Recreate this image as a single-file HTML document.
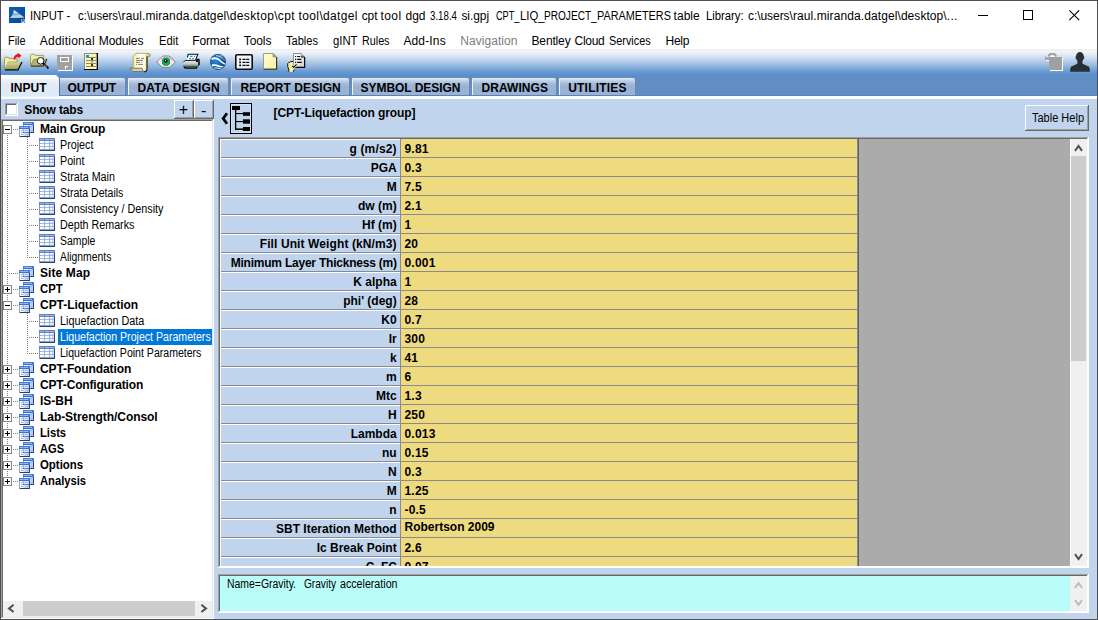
<!DOCTYPE html>
<html lang="en"><head><meta charset="utf-8"><title>INPUT - gINT</title>
<style>
html,body{margin:0;padding:0;}
body{width:1098px;height:620px;overflow:hidden;position:relative;background:#fff;font-family:"Liberation Sans",sans-serif;font-size:12px;color:#000;}
.a{position:absolute;}
.t{position:absolute;white-space:pre;line-height:16px;height:16px;transform-origin:0 0;}
.r{transform-origin:100% 0;}
.b{font-weight:bold;}
.v{letter-spacing:.2px;}
</style></head><body>
<div class="a" style="left:0px;top:49px;width:1098px;height:26px;background:linear-gradient(#f0f0f0 0,#f0f0f0 2px,#f4f7fc 2px,#dfe9f6 6px,#c6d8ee 10px,#a9c5e6 14px,#8db3dd 18px,#6c9dd4 22px,#578fcd 26px);"></div>
<div class="a" style="left:0px;top:75px;width:1098px;height:21px;background:#608dc3;"></div>
<div class="a" style="left:0px;top:95px;width:1098px;height:1px;background:#5f80b2;"></div>
<div class="a" style="left:0px;top:96px;width:1098px;height:3px;background:#fafcff;"></div>
<div class="a" style="left:0px;top:99px;width:1098px;height:521px;background:#c0d5ed;"></div>
<div class="a" style="left:1px;top:75px;width:58px;height:24px;background:linear-gradient(#fff 0,#fff 2px,#edf3fb 5px,#e1ebf8 9px,#dfeaf7 21px,#f4f8fd 22px,#fafcff 24px);clip-path:polygon(0 0,55px 0,58px 3px,58px 100%,0 100%);"></div>
<div class="a" style="left:59px;top:78px;width:67px;height:17px;background:#7186ae;border-radius:0px 2px 0 0;"></div>
<div class="a" style="left:59px;top:78px;width:66px;height:17px;background:linear-gradient(#e6edf7 0,#c9d7ea 2px,#a9bfdc 5px,#9ab3d5 8px,#9ab3d4 100%);border-radius:0px 2px 0 0;border-left:1px solid #5d7099;box-sizing:border-box;"></div>
<div class="a" style="left:128px;top:78px;width:101px;height:17px;background:#7186ae;border-radius:1px 2px 0 0;"></div>
<div class="a" style="left:128px;top:78px;width:100px;height:17px;background:linear-gradient(#e6edf7 0,#c9d7ea 2px,#a9bfdc 5px,#9ab3d5 8px,#9ab3d4 100%);border-radius:1px 2px 0 0;border-left:1px solid #eef3fa;box-sizing:border-box;"></div>
<div class="a" style="left:231px;top:78px;width:119px;height:17px;background:#7186ae;border-radius:1px 2px 0 0;"></div>
<div class="a" style="left:231px;top:78px;width:118px;height:17px;background:linear-gradient(#e6edf7 0,#c9d7ea 2px,#a9bfdc 5px,#9ab3d5 8px,#9ab3d4 100%);border-radius:1px 2px 0 0;border-left:1px solid #eef3fa;box-sizing:border-box;"></div>
<div class="a" style="left:352px;top:78px;width:118px;height:17px;background:#7186ae;border-radius:1px 2px 0 0;"></div>
<div class="a" style="left:352px;top:78px;width:117px;height:17px;background:linear-gradient(#e6edf7 0,#c9d7ea 2px,#a9bfdc 5px,#9ab3d5 8px,#9ab3d4 100%);border-radius:1px 2px 0 0;border-left:1px solid #eef3fa;box-sizing:border-box;"></div>
<div class="a" style="left:472px;top:78px;width:85px;height:17px;background:#7186ae;border-radius:1px 2px 0 0;"></div>
<div class="a" style="left:472px;top:78px;width:84px;height:17px;background:linear-gradient(#e6edf7 0,#c9d7ea 2px,#a9bfdc 5px,#9ab3d5 8px,#9ab3d4 100%);border-radius:1px 2px 0 0;border-left:1px solid #eef3fa;box-sizing:border-box;"></div>
<div class="a" style="left:559px;top:78px;width:77px;height:17px;background:#7186ae;border-radius:1px 2px 0 0;"></div>
<div class="a" style="left:559px;top:78px;width:76px;height:17px;background:linear-gradient(#e6edf7 0,#c9d7ea 2px,#a9bfdc 5px,#9ab3d5 8px,#9ab3d4 100%);border-radius:1px 2px 0 0;border-left:1px solid #eef3fa;box-sizing:border-box;"></div>
<div class="a" style="left:1px;top:119px;width:213px;height:500px;background:#fff;"></div>
<div class="a" style="left:1px;top:119px;width:212px;height:1px;background:#a0a0a0;"></div>
<div class="a" style="left:1px;top:119px;width:1px;height:499px;background:#a0a0a0;"></div>
<div class="a" style="left:2px;top:120px;width:210px;height:1px;background:#696969;"></div>
<div class="a" style="left:2px;top:120px;width:1px;height:497px;background:#696969;"></div>
<div class="a" style="left:212px;top:120px;width:1px;height:498px;background:#e3e3e3;"></div>
<div class="a" style="left:2px;top:617px;width:211px;height:1px;background:#e3e3e3;"></div>
<div class="a" style="left:3px;top:601px;width:209px;height:16px;background:#f0f0f0;"></div>
<div class="a" style="left:23px;top:601px;width:172px;height:15px;background:#cdcdcd;"></div>
<svg class="a" style="left:7px;top:604px;" width="8" height="9" viewBox="0 0 8 9" ><path d="M6.6 0.8 L2 4.4 L6.6 8" fill="none" stroke="#505050" stroke-width="2"/></svg>
<svg class="a" style="left:200px;top:604px;" width="8" height="9" viewBox="0 0 8 9" ><path d="M1.4 0.8 L6 4.4 L1.4 8" fill="none" stroke="#505050" stroke-width="2"/></svg>
<div class="a" style="left:218px;top:137px;width:871px;height:431px;background:#fff;"></div>
<div class="a" style="left:218px;top:137px;width:870px;height:1px;background:#a0a0a0;"></div>
<div class="a" style="left:218px;top:137px;width:1px;height:430px;background:#a0a0a0;"></div>
<div class="a" style="left:219px;top:138px;width:868px;height:1px;background:#696969;"></div>
<div class="a" style="left:219px;top:138px;width:1px;height:428px;background:#696969;"></div>
<div class="a" style="left:220px;top:139px;width:180px;height:427px;background:#c0d5ed;"></div>
<div class="a" style="left:400px;top:139px;width:1px;height:427px;background:#8a8a8c;"></div>
<div class="a" style="left:401px;top:139px;width:456px;height:427px;background:#eedb80;"></div>
<div class="a" style="left:857px;top:139px;width:1px;height:427px;background:#8a8a96;"></div>
<div class="a" style="left:858px;top:139px;width:1px;height:427px;background:#606060;"></div>
<div class="a" style="left:859px;top:139px;width:211px;height:427px;background:#ababab;"></div>
<div class="a" style="left:1070px;top:139px;width:17px;height:427px;background:#f0f0f0;"></div>
<div class="a" style="left:1071px;top:156px;width:15px;height:205px;background:#cdcdcd;"></div>
<div class="a" style="left:1070px;top:139px;width:1px;height:427px;background:#fbfbfb;"></div>
<svg class="a" style="left:1074px;top:144px;" width="9" height="8" viewBox="0 0 9 8" ><path d="M1 6.8 L4.5 2 L8 6.8" fill="none" stroke="#505050" stroke-width="2"/></svg>
<svg class="a" style="left:1074px;top:553px;" width="9" height="8" viewBox="0 0 9 8" ><path d="M1 1.2 L4.5 6 L8 1.2" fill="none" stroke="#505050" stroke-width="2"/></svg>
<div class="a" style="left:218px;top:574px;width:871px;height:39px;background:#fff;"></div>
<div class="a" style="left:218px;top:574px;width:870px;height:1px;background:#a0a0a0;"></div>
<div class="a" style="left:218px;top:574px;width:1px;height:38px;background:#a0a0a0;"></div>
<div class="a" style="left:219px;top:575px;width:868px;height:1px;background:#696969;"></div>
<div class="a" style="left:219px;top:575px;width:1px;height:36px;background:#696969;"></div>
<div class="a" style="left:220px;top:576px;width:850px;height:35px;background:#b9fdf8;"></div>
<div class="a" style="left:1070px;top:576px;width:17px;height:35px;background:#f0f0f0;"></div>
<svg class="a" style="left:1074px;top:581px;" width="9" height="8" viewBox="0 0 9 8" ><path d="M1 6.8 L4.5 2.2 L8 6.8" fill="none" stroke="#bcbcbc" stroke-width="2"/></svg>
<svg class="a" style="left:1074px;top:599px;" width="9" height="8" viewBox="0 0 9 8" ><path d="M1 1.2 L4.5 5.8 L8 1.2" fill="none" stroke="#bcbcbc" stroke-width="2"/></svg>
<div class="a" style="left:220px;top:139px;width:180px;height:1px;background:#fff;"></div>
<div class="a" style="left:220px;top:157px;width:637px;height:1px;background:#8a8a8c;"></div>
<div class="a" style="left:220px;top:158px;width:180px;height:1px;background:#fff;"></div>
<div class="a" style="left:220px;top:176px;width:637px;height:1px;background:#8a8a8c;"></div>
<div class="a" style="left:220px;top:177px;width:180px;height:1px;background:#fff;"></div>
<div class="a" style="left:220px;top:195px;width:637px;height:1px;background:#8a8a8c;"></div>
<div class="a" style="left:220px;top:196px;width:180px;height:1px;background:#fff;"></div>
<div class="a" style="left:220px;top:214px;width:637px;height:1px;background:#8a8a8c;"></div>
<div class="a" style="left:220px;top:215px;width:180px;height:1px;background:#fff;"></div>
<div class="a" style="left:220px;top:233px;width:637px;height:1px;background:#8a8a8c;"></div>
<div class="a" style="left:220px;top:234px;width:180px;height:1px;background:#fff;"></div>
<div class="a" style="left:220px;top:252px;width:637px;height:1px;background:#8a8a8c;"></div>
<div class="a" style="left:220px;top:253px;width:180px;height:1px;background:#fff;"></div>
<div class="a" style="left:220px;top:271px;width:637px;height:1px;background:#8a8a8c;"></div>
<div class="a" style="left:220px;top:272px;width:180px;height:1px;background:#fff;"></div>
<div class="a" style="left:220px;top:290px;width:637px;height:1px;background:#8a8a8c;"></div>
<div class="a" style="left:220px;top:291px;width:180px;height:1px;background:#fff;"></div>
<div class="a" style="left:220px;top:309px;width:637px;height:1px;background:#8a8a8c;"></div>
<div class="a" style="left:220px;top:310px;width:180px;height:1px;background:#fff;"></div>
<div class="a" style="left:220px;top:328px;width:637px;height:1px;background:#8a8a8c;"></div>
<div class="a" style="left:220px;top:329px;width:180px;height:1px;background:#fff;"></div>
<div class="a" style="left:220px;top:347px;width:637px;height:1px;background:#8a8a8c;"></div>
<div class="a" style="left:220px;top:348px;width:180px;height:1px;background:#fff;"></div>
<div class="a" style="left:220px;top:366px;width:637px;height:1px;background:#8a8a8c;"></div>
<div class="a" style="left:220px;top:367px;width:180px;height:1px;background:#fff;"></div>
<div class="a" style="left:220px;top:385px;width:637px;height:1px;background:#8a8a8c;"></div>
<div class="a" style="left:220px;top:386px;width:180px;height:1px;background:#fff;"></div>
<div class="a" style="left:220px;top:404px;width:637px;height:1px;background:#8a8a8c;"></div>
<div class="a" style="left:220px;top:405px;width:180px;height:1px;background:#fff;"></div>
<div class="a" style="left:220px;top:423px;width:637px;height:1px;background:#8a8a8c;"></div>
<div class="a" style="left:220px;top:424px;width:180px;height:1px;background:#fff;"></div>
<div class="a" style="left:220px;top:442px;width:637px;height:1px;background:#8a8a8c;"></div>
<div class="a" style="left:220px;top:443px;width:180px;height:1px;background:#fff;"></div>
<div class="a" style="left:220px;top:461px;width:637px;height:1px;background:#8a8a8c;"></div>
<div class="a" style="left:220px;top:462px;width:180px;height:1px;background:#fff;"></div>
<div class="a" style="left:220px;top:480px;width:637px;height:1px;background:#8a8a8c;"></div>
<div class="a" style="left:220px;top:481px;width:180px;height:1px;background:#fff;"></div>
<div class="a" style="left:220px;top:499px;width:637px;height:1px;background:#8a8a8c;"></div>
<div class="a" style="left:220px;top:500px;width:180px;height:1px;background:#fff;"></div>
<div class="a" style="left:220px;top:518px;width:637px;height:1px;background:#8a8a8c;"></div>
<div class="a" style="left:220px;top:519px;width:180px;height:1px;background:#fff;"></div>
<div class="a" style="left:220px;top:537px;width:637px;height:1px;background:#8a8a8c;"></div>
<div class="a" style="left:220px;top:538px;width:180px;height:1px;background:#fff;"></div>
<div class="a" style="left:220px;top:556px;width:637px;height:1px;background:#8a8a8c;"></div>
<div class="a" style="left:220px;top:557px;width:180px;height:1px;background:#fff;"></div>
<div class="a" style="left:220px;top:139px;width:1px;height:427px;background:#fff;"></div>
<div class="a" style="left:174px;top:100px;width:20px;height:19px;background:#c0d5ed;"></div>
<div class="a" style="left:174px;top:100px;width:19px;height:1px;background:#fff;"></div>
<div class="a" style="left:174px;top:100px;width:1px;height:18px;background:#fff;"></div>
<div class="a" style="left:193px;top:100px;width:1px;height:19px;background:#696969;"></div>
<div class="a" style="left:174px;top:118px;width:20px;height:1px;background:#696969;"></div>
<div class="a" style="left:192px;top:101px;width:1px;height:17px;background:#a0a0a0;"></div>
<div class="a" style="left:175px;top:117px;width:18px;height:1px;background:#a0a0a0;"></div>
<div class="a" style="left:194px;top:100px;width:20px;height:19px;background:#c0d5ed;"></div>
<div class="a" style="left:194px;top:100px;width:19px;height:1px;background:#fff;"></div>
<div class="a" style="left:194px;top:100px;width:1px;height:18px;background:#fff;"></div>
<div class="a" style="left:213px;top:100px;width:1px;height:19px;background:#696969;"></div>
<div class="a" style="left:194px;top:118px;width:20px;height:1px;background:#696969;"></div>
<div class="a" style="left:212px;top:101px;width:1px;height:17px;background:#a0a0a0;"></div>
<div class="a" style="left:195px;top:117px;width:18px;height:1px;background:#a0a0a0;"></div>
<div class="a" style="left:1025px;top:105px;width:64px;height:26px;background:#c0d5ed;"></div>
<div class="a" style="left:1025px;top:105px;width:63px;height:1px;background:#fff;"></div>
<div class="a" style="left:1025px;top:105px;width:1px;height:25px;background:#fff;"></div>
<div class="a" style="left:1088px;top:105px;width:1px;height:26px;background:#696969;"></div>
<div class="a" style="left:1025px;top:130px;width:64px;height:1px;background:#696969;"></div>
<div class="a" style="left:1087px;top:106px;width:1px;height:24px;background:#a0a0a0;"></div>
<div class="a" style="left:1026px;top:129px;width:62px;height:1px;background:#a0a0a0;"></div>
<div class="a" style="left:5px;top:103px;width:13px;height:13px;background:#fff;"></div>
<div class="a" style="left:5px;top:103px;width:13px;height:1px;background:#a0a0a0;"></div>
<div class="a" style="left:5px;top:103px;width:1px;height:13px;background:#a0a0a0;"></div>
<div class="a" style="left:6px;top:104px;width:11px;height:1px;background:#696969;"></div>
<div class="a" style="left:6px;top:104px;width:1px;height:11px;background:#696969;"></div>
<div class="a" style="left:17px;top:103px;width:1px;height:13px;background:#fff;"></div>
<div class="a" style="left:5px;top:115px;width:13px;height:1px;background:#fff;"></div>
<div class="a" style="left:16px;top:104px;width:1px;height:11px;background:#e3e3e3;"></div>
<div class="a" style="left:6px;top:114px;width:11px;height:1px;background:#e3e3e3;"></div>
<div class="a" style="left:0px;top:0px;width:1098px;height:1px;background:#4f4f4f;"></div>
<div class="a" style="left:0px;top:0px;width:1px;height:620px;background:#4f4f4f;"></div>
<div class="a" style="left:1097px;top:0px;width:1px;height:620px;background:#4f4f4f;"></div>
<div class="a" style="left:0px;top:619px;width:1098px;height:1px;background:#4f4f4f;"></div>
<svg class="a" style="left:9px;top:7px;" width="16" height="16" viewBox="0 0 16 16" ><defs><linearGradient id="gapp" x1="0" y1="0" x2="1" y2="1"><stop offset="0" stop-color="#0d62b2"/><stop offset="1" stop-color="#07468a"/></linearGradient></defs><rect width="16" height="16" fill="url(#gapp)"/><path d="M4.7 2.8 L15 10 V10.5 L1 10.9 C3 9 4.4 6 4.7 2.8 Z" fill="#8fb3da"/><path d="M1 10.9 L15 10.5 L11.4 8 L3.6 8.8 Z" fill="#bdd2e9"/><path d="M4.9 3.2 L8.8 6 L5.3 6.3 Z" fill="#dce8f5"/><path d="M12.2 12.4h2.8v.8h-2v.7h2v2h-2.8v-.8h2v-.5h-2zM15.3 12.2h.7v3.6h-.7z" fill="#c4d6ea"/></svg>
<svg class="a" style="left:978px;top:15px;" width="10" height="1" viewBox="0 0 10 1" shape-rendering="crispEdges"><rect width="10" height="1" fill="#000"/></svg>
<svg class="a" style="left:1023px;top:10px;" width="10" height="10" viewBox="0 0 10 10" shape-rendering="crispEdges"><rect x="0.5" y="0.5" width="9" height="9" fill="none" stroke="#000" stroke-width="1"/></svg>
<svg class="a" style="left:1069px;top:10px;" width="11" height="11" viewBox="0 0 11 11" ><path d="M0.3 0.3 L10.2 10.2 M10.2 0.3 L0.3 10.2" stroke="#000" stroke-width="1.1" fill="none"/></svg>
<svg class="a" style="left:4px;top:52px;" width="19" height="19" viewBox="0 0 19 19" ><path d="M0.5 17.5 V6.3 L1.3 5.3 H4.4 L5.2 6.6 H13 V10 H4.5 Z" fill="#f6f0a3" stroke="#8f8b50" stroke-width=".8"/><path d="M0.6 17.6 L4.3 10.4 H17.8 L13.9 17.6 Z" fill="#c9c684"/><path d="M0.6 17.6 L4.3 10.4 H17.8 L13.9 17.6 Z" fill="url(#gfold)" /><path d="M17.9 10 L14 17.9 H1" fill="none" stroke="#000" stroke-width="1.2"/><path d="M9.8 7.8 C9.6 3.8 11.8 2 14 2.2 L13.4 0.4 L17.4 3.4 L14.6 6.6 L14.3 4.8 C12.6 4.6 11.4 5.6 11.1 7.8 Z" fill="#f40b0b"/><defs><linearGradient id="gfold" x1="0" y1="0" x2="0" y2="1"><stop offset="0" stop-color="#d6d392"/><stop offset="1" stop-color="#9c9a5c"/></linearGradient></defs></svg>
<svg class="a" style="left:30px;top:53px;" width="20" height="17" viewBox="0 0 20 17" ><path d="M0.5 12.8 V2.2 L1.4 1.2 H4.4 L5.2 2.4 H13.4 V6.4 H4.5 Z" fill="#f3eea5" stroke="#8f8b50" stroke-width=".8"/><path d="M0.6 12.9 L3.6 6.3 H16.8 L13.6 12.9 Z" fill="#b5b376" stroke="#7f7c48" stroke-width=".6"/><path d="M16.9 6 L13.8 13.1 H1" fill="none" stroke="#2a2a20" stroke-width="1"/><circle cx="10.6" cy="7.8" r="3.3" fill="#fff" stroke="#1a1a1a" stroke-width="1"/><path d="M13.4 10.6 L17.8 14.8" stroke="#000" stroke-width="2" stroke-linecap="round"/><path d="M14.4 11.9 L16.8 14.2" stroke="#fff" stroke-width=".8"/></svg>
<svg class="a" style="left:57px;top:55px;" width="17" height="17" viewBox="0 0 17 17" shape-rendering="crispEdges"><rect x="1" y="1" width="15" height="15" fill="#fff"/><rect x="0" y="0" width="15" height="15" fill="#a0a0a0"/><rect x="3" y="2" width="9" height="5" fill="#fff"/><rect x="4" y="3" width="7" height="3" fill="#a0a0a0"/><path d="M8 11h3v1h-2v2h-1z" fill="#fff"/></svg>
<svg class="a" style="left:84px;top:53px;" width="15" height="18" viewBox="0 0 15 18" ><rect x="0" y="0" width="14" height="17" fill="#000"/><rect x="0" y="0" width="12.5" height="16" fill="#8a8a8a"/><rect x="1" y="1" width="11.5" height="15" fill="#fdf8a6"/><rect x="2" y="2" width="3" height="2" fill="#0a96ee"/><path d="M2 4.5h10M2 7.5h10M2 10.5h10M2 13.5h10" stroke="#8a8a7a" stroke-width="1"/><rect x="7.3" y="5" width="1.6" height="8" fill="#9a9a9a"/><rect x="7.3" y="5" width="1.6" height="2" fill="#111"/><rect x="7.3" y="11" width="1.6" height="2" fill="#111"/></svg>
<svg class="a" style="left:129px;top:52px;" width="22" height="21" viewBox="0 0 22 21" ><defs><linearGradient id="gscr" x1="0" y1="0" x2="1" y2="0"><stop offset="0" stop-color="#f8ee98"/><stop offset=".45" stop-color="#fffdf0"/><stop offset=".75" stop-color="#fffbe0"/><stop offset="1" stop-color="#f3e88c"/></linearGradient></defs><path d="M4.2 4.6 L7 1.3 H19 C18.2 2.2 18 3 18 4.6 V16.6 C18 18.6 16.8 19.8 15 19.8 C13.8 19.6 13.2 18.6 13 16.6 H4.2 Z" fill="url(#gscr)" stroke="#a39a5e" stroke-width=".8"/><path d="M18.4 1.6 C20.6 1.4 21.6 2.6 21 3.8 C20.4 4.6 18.8 4.6 18.2 4" fill="#f6eeaa" stroke="#6f6940" stroke-width=".9"/><path d="M18 4.4 V16.6 C18 18.6 16.8 19.9 15 19.9" fill="none" stroke="#1c1c14" stroke-width="1.1"/><path d="M1 16.2 H13 L14.6 19.6 H4 Z" fill="#d2d0a6" stroke="#6d6a48" stroke-width=".8"/><path d="M7 6.4h3.7M12 6.4h3M7 8.4h7M7 10.4h3.7M12.2 10.4h1M7 12.4h1M9 12.4h5" stroke="#7d7d7d" stroke-width="1"/></svg>
<svg class="a" style="left:156px;top:55px;" width="20" height="14" viewBox="0 0 20 14" ><path d="M1 6.8 C2.6 4.6 5 2.6 6.4 1.8 L7 1 H13 L14 1.8 C16 2.8 18 5 19 7.2 C17.4 9.4 15 11.4 13.6 12.4 H6.6 C4.6 11.2 2.4 9 1 6.8 Z" fill="#e9e9e9" stroke="#7a7a7a" stroke-width=".9"/><path d="M1.8 5.6 C3.4 4 5 3 6.4 2.6 M12.6 2.6 C14.4 3 15.6 4 16.6 5" fill="none" stroke="#e3a8da" stroke-width="1.3"/><path d="M17 5.6 L18.6 7.2" stroke="#e8c79a" stroke-width="1" stroke-dasharray="1 .6"/><path d="M8 2.6 H12 L14 4.6 V8.6 L12 10.8 H8 L6 8.6 V4.6 Z" fill="#0e9c4c"/><path d="M8.4 3.2 H11.6 L13.2 4.8 V8 L11.6 9.8 H8.4 L6.8 8 V4.8 Z" fill="#14ab56"/><circle cx="9.7" cy="5.8" r="1.9" fill="#0a0a0a"/><path d="M8.8 4.8h1.6l-1.2 1.6z" fill="#fff"/></svg>
<svg class="a" style="left:182px;top:53px;" width="19" height="17" viewBox="0 0 19 17" ><path d="M6.2 1.2 H15.8 L13.6 7.2 H4.6 Z" fill="#fff"/><path d="M5.4 4.4 L6.2 1.2 H15.8 L13.4 7.6" fill="none" stroke="#0c0c0c" stroke-width="1.1"/><path d="M8 3.4h2.6M12 3.4h1M7 5.6h2M10 5.6h2" stroke="#19a0ee" stroke-width="1.2"/><path d="M3 7.6 H14.4 L16.2 6 H17.8 V8 L16 9.4 H1.2 Z" fill="#e4e4e4"/><path d="M1.2 9.4 L3.2 7.4 H13.6" fill="none" stroke="#111" stroke-width="1"/><path d="M14.4 5.8 H17.6 V7.6 L16 9.2 H13.8 Z" fill="#111"/><rect x="1.2" y="9.2" width="14.8" height="1.6" fill="#d6d6d6"/><rect x="1.2" y="10.8" width="14.8" height="1.4" fill="#b0b0b0"/><rect x="1.2" y="12.2" width="14.8" height="1.3" fill="#8c8c8c"/><path d="M16 9.2 L18 7.4 V11.6 L16 13.5 Z" fill="#2a2a2a"/><rect x="9.8" y="12" width="2.3" height="1.2" fill="#10d828"/><path d="M1 13.4 H16.2 L14.6 15.8 H3 Z" fill="#000"/><path d="M3.4 14.4h10.6" stroke="#6a6a6a" stroke-width=".7"/></svg>
<svg class="a" style="left:210px;top:54px;" width="16" height="16" viewBox="0 0 16 16" ><defs><radialGradient id="gglobe" cx=".36" cy=".42" r=".7"><stop offset="0" stop-color="#2f88d4"/><stop offset=".55" stop-color="#1763b0"/><stop offset="1" stop-color="#072f63"/></radialGradient><clipPath id="cg"><circle cx="8" cy="7.9" r="7.9"/></clipPath></defs><circle cx="8" cy="7.9" r="7.9" fill="url(#gglobe)"/><g clip-path="url(#cg)" fill="#fff"><path d="M1.6 3.8 C4.5 2.4 8 3.4 10 5.4 C12 7.4 14 9 15.8 9.4 L15.4 10.9 C13 10.2 11 8.6 9 6.8 C7 5 4.5 4.8 1.4 5.9 Z"/><path d="M6 1.2 C9 1 12.5 3 15.2 6.2 L15.6 7.4 C12.6 4 9.5 2.3 5.6 2.1 Z" opacity=".8"/><path d="M10 0.5 C12 0.9 13.9 2.2 15 3.9 L14 3.7 C13 2.5 11.4 1.6 9.2 1.2 Z" opacity=".6"/><path d="M1.6 10.6 C4 9.9 7 10.6 9.4 11.6 C11 12.2 12.6 12.4 14 12.2 L13 13.5 C11 13.6 9 13 7 12.4 C5 11.8 3.4 12 2.2 12.8 Z"/><path d="M3.6 13.7 C5.6 13.1 8 13.6 11.8 14.3 L10.4 15.2 C8 14.7 6 14.3 4.6 14.8 Z" opacity=".9"/></g><circle cx="8" cy="7.9" r="7.6" fill="none" stroke="#0a2f5e" stroke-width=".5" opacity=".6"/></svg>
<svg class="a" style="left:235px;top:54px;" width="18" height="16" viewBox="0 0 18 16" ><defs><linearGradient id="glist" x1="0" y1="0" x2="1" y2="1"><stop offset="0" stop-color="#fff"/><stop offset="1" stop-color="#dfe7f3"/></linearGradient></defs><rect x="0.8" y="0.8" width="16.4" height="14.4" rx="1.2" fill="url(#glist)" stroke="#0c0c0c" stroke-width="1.6"/><path d="M4.2 4.4h1.8v1.8h-1.8zM4.2 7.4h1.8v1.8h-1.8zM4.2 10.4h1.8v1.8h-1.8z" fill="#0c0c0c"/><path d="M7.4 5.3h3.2M11.2 5.3h3M7.4 8.3h3.2M11.2 8.3h3M7.4 11.3h3.2M11.2 11.3h3" stroke="#0c0c0c" stroke-width="1.2"/></svg>
<svg class="a" style="left:263px;top:53px;" width="15" height="17" viewBox="0 0 15 17" ><defs><linearGradient id="gpage" x1="0" y1="0" x2="1" y2="1"><stop offset="0" stop-color="#fffdd2"/><stop offset="1" stop-color="#f6f0a4"/></linearGradient></defs><path d="M0.5 0.5 H10 L13.6 4 V16 H0.5 Z" fill="url(#gpage)" stroke="#94947e" stroke-width=".9"/><path d="M13.6 4 V16.2 H0.6" fill="none" stroke="#34342a" stroke-width="1.1"/><path d="M10 0.6 V4 H13.5 Z" fill="#b4b4a4" stroke="#6c6c60" stroke-width=".5"/></svg>
<svg class="a" style="left:287px;top:53px;" width="19" height="20" viewBox="0 0 19 20" ><defs><linearGradient id="gdoc" x1="0" y1="0" x2="1" y2="1"><stop offset="0" stop-color="#fff"/><stop offset="1" stop-color="#cfcfcf"/></linearGradient></defs><path d="M6.5 0.5 H14 L17.6 4 V14.2 H6.5 Z" fill="url(#gdoc)" stroke="#858585" stroke-width=".9"/><path d="M17.6 4 V14.4 H7.4" fill="none" stroke="#0c0c0c" stroke-width="1.2"/><path d="M14 0.6 V4 H17.5 Z" fill="#a4a4a4"/><path d="M14 4 H17.5" stroke="#0c0c0c" stroke-width=".9"/><path d="M8 3.5h1.2M10.2 3.5h3M8 6.4h1.2M10.2 6.4h4M8 9.4h1.2M10.2 9.4h4.6" stroke="#0c0c0c" stroke-width="1.1"/><path d="M0.7 10.6 L1.6 9.6 L3 9.4 L3.6 8.5 L6 8.5 L6.2 11.5 L7 13.2 L9.4 10.8 L10.4 11.5 L10.2 12.7 L7.2 15.6 L6.4 18.8 H1.8 V16 L0.7 13.6 Z" fill="#f8f2a0"/><path d="M1.8 18.8 V16 L0.7 13.6 V10.6 L1.6 9.6 L3 9.4 L3.6 8.5 H6" fill="none" stroke="#141414" stroke-width="1"/><path d="M5.2 12.8 L6.6 14.4 L9.6 11.4" fill="none" stroke="#141414" stroke-width="1.2"/><path d="M6.6 18.8 L7 16.6" stroke="#141414" stroke-width="1"/></svg>
<svg class="a" style="left:1045px;top:53px;" width="18" height="19" viewBox="0 0 18 19" ><rect x="5" y="5" width="13" height="13" fill="#fff"/><rect x="4" y="4" width="13" height="13" fill="#a0a0a0"/><path d="M1 4.4 H4 V7 H0 V2.2 Z" fill="#a0a0a0"/><path d="M1 7h3.2v1H1z" fill="#fff"/><path d="M3.4 3.6 C4 1.2 6 0.6 7.6 0.6 C9.4 0.6 10.6 1.6 11 3.4" fill="none" stroke="#9c9c9c" stroke-width="1.9"/><path d="M5.2 4 C6 2.8 9 2.8 9.6 4 Z" fill="#fff"/></svg>
<svg class="a" style="left:1070px;top:52px;" width="21" height="21" viewBox="0 0 21 21" ><ellipse cx="9.9" cy="5" rx="4" ry="4.9" fill="#2a2f35"/><path d="M5.6 4.6h8.6v2h-8.6z" fill="#2a2f35"/><path d="M7.4 8 H12.4 V11.4 C13.6 12.4 16.6 13.2 18.6 14.4 C19.6 15.2 19.8 16.4 19.8 17.6 V19.8 H0.2 V17.6 C0.2 16.4 0.4 15.2 1.4 14.4 C3.4 13.2 6.4 12.4 7.4 11.4 Z" fill="#2a2f35"/></svg>
<svg class="a" style="left:230px;top:103px;" width="22" height="31" viewBox="0 0 22 31" ><rect x="0.5" y="0.5" width="21" height="30" fill="none" stroke="#000" stroke-width="1"/><rect x="1.5" y="1.5" width="19" height="28" fill="none" stroke="#d3e3f6" stroke-width="1"/><rect x="2" y="3" width="8" height="4" fill="#000"/><rect x="5" y="7" width="1.3" height="20" fill="#000"/><rect x="5" y="10" width="9" height="1.1" fill="#000"/><rect x="5" y="18" width="9" height="1.1" fill="#000"/><rect x="5" y="25.4" width="9" height="1.6" fill="#000"/><rect x="13" y="9.2" width="7" height="3.6" fill="#000"/><rect x="13" y="16.3" width="7" height="4.4" fill="#000"/><rect x="13" y="24" width="7" height="4" fill="#000"/></svg>
<svg class="a" style="left:221px;top:111px;" width="8" height="15" viewBox="0 0 8 15" ><path d="M6 2.2 L2.2 7.5 L6 12.8" fill="none" stroke="#000" stroke-width="2.8"/></svg>
<div class="a" style="left:7px;top:135px;width:1px;height:342px;background:repeating-linear-gradient(180deg,#808080 0,#808080 1px,transparent 1px,transparent 2px);"></div>
<div class="a" style="left:27px;top:137px;width:1px;height:121px;background:repeating-linear-gradient(180deg,#808080 0,#808080 1px,transparent 1px,transparent 2px);"></div>
<div class="a" style="left:27px;top:313px;width:1px;height:41px;background:repeating-linear-gradient(180deg,#808080 0,#808080 1px,transparent 1px,transparent 2px);"></div>
<svg class="a" style="left:3px;top:125px;" width="9" height="9" viewBox="0 0 9 9" shape-rendering="crispEdges"><rect x="0.5" y="0.5" width="8" height="8" fill="#fff" stroke="#858585"/><rect x="2" y="4" width="5" height="1" fill="#000"/></svg>
<div class="a" style="left:13px;top:129px;width:5px;height:1px;background:repeating-linear-gradient(90deg,#808080 0,#808080 1px,transparent 1px,transparent 2px);"></div>
<svg class="a" style="left:19px;top:122px;" width="15" height="15" viewBox="0 0 15 15" shape-rendering="crispEdges"><g transform="translate(4,0)"><rect width="11" height="11" fill="#90a7d2"/><rect x="1" y="3" width="9" height="7" fill="#f4f8ff"/><rect x="5" y="3" width="5" height="7" fill="#cfddf8"/><rect x="8" y="3" width="2" height="7" fill="#b3c8f0"/><rect width="11" height="3" fill="#4a7ce4"/><rect x="1" y="1" width="8" height="1" fill="#93b5f5"/><rect y="2" width="11" height="1" fill="#3a6cdc"/><path d="M2 4.5h3M6 4.5h3M2 6.5h3M2 8.5h3M6 8.5h3" stroke="#a9bde6" stroke-width="1"/><rect x="10" y="3" width="1" height="8" fill="#2f4a80"/><rect x="1" y="10" width="10" height="1" fill="#2b4068"/></g><g transform="translate(0,4)"><rect width="11" height="11" fill="#90a7d2"/><rect x="1" y="3" width="9" height="7" fill="#f4f8ff"/><rect x="5" y="3" width="5" height="7" fill="#cfddf8"/><rect x="8" y="3" width="2" height="7" fill="#b3c8f0"/><rect width="11" height="3" fill="#4a7ce4"/><rect x="1" y="1" width="8" height="1" fill="#93b5f5"/><rect y="2" width="11" height="1" fill="#3a6cdc"/><path d="M2 4.5h3M6 4.5h3M2 6.5h3M2 8.5h3M6 8.5h3" stroke="#a9bde6" stroke-width="1"/><rect x="10" y="3" width="1" height="8" fill="#2f4a80"/><rect x="1" y="10" width="10" height="1" fill="#2b4068"/></g><rect x="4" y="4" width="1" height="7" fill="#5a78b8" opacity=".45"/><rect x="4" y="10" width="6" height="1" fill="#2b4068" opacity=".5"/><rect x="5" y="7" width="5" height="3" fill="#c9dafa" opacity=".45"/></svg>
<div class="a" style="left:29px;top:145px;width:9px;height:1px;background:repeating-linear-gradient(90deg,#808080 0,#808080 1px,transparent 1px,transparent 2px);"></div>
<svg class="a" style="left:39px;top:138px;" width="16" height="13" viewBox="0 0 16 13" shape-rendering="crispEdges"><rect width="16" height="13" fill="#7f96c8"/><rect width="16" height="3" fill="#6080c2"/><path d="M1 1.5h4M6 1.5h4M11 1.5h4" stroke="#a3b8e2" stroke-width="1"/><rect x="15" y="3" width="1" height="10" fill="#30446f"/><rect x="1" y="12" width="15" height="1" fill="#2c406b"/><rect x="1" y="11" width="14" height="1" fill="#93a6cf"/><rect x="5" y="3" width="1" height="8" fill="#a4b5d8"/><rect x="10" y="3" width="1" height="8" fill="#a4b5d8"/><rect x="1" y="5" width="14" height="1" fill="#a4b5d8"/><rect x="1" y="8" width="14" height="1" fill="#a4b5d8"/><rect x="1" y="3" width="4" height="2" fill="#fff"/><rect x="6" y="3" width="4" height="2" fill="#f4f8ff"/><rect x="11" y="3" width="4" height="2" fill="#cfdefa"/><rect x="11" y="3" width="2" height="1" fill="#fff"/><rect x="1" y="6" width="4" height="2" fill="#fff"/><rect x="6" y="6" width="4" height="2" fill="#f4f8ff"/><rect x="11" y="6" width="4" height="2" fill="#cfdefa"/><rect x="11" y="6" width="2" height="1" fill="#fff"/><rect x="1" y="9" width="4" height="2" fill="#fff"/><rect x="6" y="9" width="4" height="2" fill="#f4f8ff"/><rect x="11" y="9" width="4" height="2" fill="#cfdefa"/><rect x="11" y="9" width="2" height="1" fill="#fff"/></svg>
<div class="a" style="left:29px;top:161px;width:9px;height:1px;background:repeating-linear-gradient(90deg,#808080 0,#808080 1px,transparent 1px,transparent 2px);"></div>
<svg class="a" style="left:39px;top:154px;" width="16" height="13" viewBox="0 0 16 13" shape-rendering="crispEdges"><rect width="16" height="13" fill="#7f96c8"/><rect width="16" height="3" fill="#6080c2"/><path d="M1 1.5h4M6 1.5h4M11 1.5h4" stroke="#a3b8e2" stroke-width="1"/><rect x="15" y="3" width="1" height="10" fill="#30446f"/><rect x="1" y="12" width="15" height="1" fill="#2c406b"/><rect x="1" y="11" width="14" height="1" fill="#93a6cf"/><rect x="5" y="3" width="1" height="8" fill="#a4b5d8"/><rect x="10" y="3" width="1" height="8" fill="#a4b5d8"/><rect x="1" y="5" width="14" height="1" fill="#a4b5d8"/><rect x="1" y="8" width="14" height="1" fill="#a4b5d8"/><rect x="1" y="3" width="4" height="2" fill="#fff"/><rect x="6" y="3" width="4" height="2" fill="#f4f8ff"/><rect x="11" y="3" width="4" height="2" fill="#cfdefa"/><rect x="11" y="3" width="2" height="1" fill="#fff"/><rect x="1" y="6" width="4" height="2" fill="#fff"/><rect x="6" y="6" width="4" height="2" fill="#f4f8ff"/><rect x="11" y="6" width="4" height="2" fill="#cfdefa"/><rect x="11" y="6" width="2" height="1" fill="#fff"/><rect x="1" y="9" width="4" height="2" fill="#fff"/><rect x="6" y="9" width="4" height="2" fill="#f4f8ff"/><rect x="11" y="9" width="4" height="2" fill="#cfdefa"/><rect x="11" y="9" width="2" height="1" fill="#fff"/></svg>
<div class="a" style="left:29px;top:177px;width:9px;height:1px;background:repeating-linear-gradient(90deg,#808080 0,#808080 1px,transparent 1px,transparent 2px);"></div>
<svg class="a" style="left:39px;top:170px;" width="16" height="13" viewBox="0 0 16 13" shape-rendering="crispEdges"><rect width="16" height="13" fill="#7f96c8"/><rect width="16" height="3" fill="#6080c2"/><path d="M1 1.5h4M6 1.5h4M11 1.5h4" stroke="#a3b8e2" stroke-width="1"/><rect x="15" y="3" width="1" height="10" fill="#30446f"/><rect x="1" y="12" width="15" height="1" fill="#2c406b"/><rect x="1" y="11" width="14" height="1" fill="#93a6cf"/><rect x="5" y="3" width="1" height="8" fill="#a4b5d8"/><rect x="10" y="3" width="1" height="8" fill="#a4b5d8"/><rect x="1" y="5" width="14" height="1" fill="#a4b5d8"/><rect x="1" y="8" width="14" height="1" fill="#a4b5d8"/><rect x="1" y="3" width="4" height="2" fill="#fff"/><rect x="6" y="3" width="4" height="2" fill="#f4f8ff"/><rect x="11" y="3" width="4" height="2" fill="#cfdefa"/><rect x="11" y="3" width="2" height="1" fill="#fff"/><rect x="1" y="6" width="4" height="2" fill="#fff"/><rect x="6" y="6" width="4" height="2" fill="#f4f8ff"/><rect x="11" y="6" width="4" height="2" fill="#cfdefa"/><rect x="11" y="6" width="2" height="1" fill="#fff"/><rect x="1" y="9" width="4" height="2" fill="#fff"/><rect x="6" y="9" width="4" height="2" fill="#f4f8ff"/><rect x="11" y="9" width="4" height="2" fill="#cfdefa"/><rect x="11" y="9" width="2" height="1" fill="#fff"/></svg>
<div class="a" style="left:29px;top:193px;width:9px;height:1px;background:repeating-linear-gradient(90deg,#808080 0,#808080 1px,transparent 1px,transparent 2px);"></div>
<svg class="a" style="left:39px;top:186px;" width="16" height="13" viewBox="0 0 16 13" shape-rendering="crispEdges"><rect width="16" height="13" fill="#7f96c8"/><rect width="16" height="3" fill="#6080c2"/><path d="M1 1.5h4M6 1.5h4M11 1.5h4" stroke="#a3b8e2" stroke-width="1"/><rect x="15" y="3" width="1" height="10" fill="#30446f"/><rect x="1" y="12" width="15" height="1" fill="#2c406b"/><rect x="1" y="11" width="14" height="1" fill="#93a6cf"/><rect x="5" y="3" width="1" height="8" fill="#a4b5d8"/><rect x="10" y="3" width="1" height="8" fill="#a4b5d8"/><rect x="1" y="5" width="14" height="1" fill="#a4b5d8"/><rect x="1" y="8" width="14" height="1" fill="#a4b5d8"/><rect x="1" y="3" width="4" height="2" fill="#fff"/><rect x="6" y="3" width="4" height="2" fill="#f4f8ff"/><rect x="11" y="3" width="4" height="2" fill="#cfdefa"/><rect x="11" y="3" width="2" height="1" fill="#fff"/><rect x="1" y="6" width="4" height="2" fill="#fff"/><rect x="6" y="6" width="4" height="2" fill="#f4f8ff"/><rect x="11" y="6" width="4" height="2" fill="#cfdefa"/><rect x="11" y="6" width="2" height="1" fill="#fff"/><rect x="1" y="9" width="4" height="2" fill="#fff"/><rect x="6" y="9" width="4" height="2" fill="#f4f8ff"/><rect x="11" y="9" width="4" height="2" fill="#cfdefa"/><rect x="11" y="9" width="2" height="1" fill="#fff"/></svg>
<div class="a" style="left:29px;top:209px;width:9px;height:1px;background:repeating-linear-gradient(90deg,#808080 0,#808080 1px,transparent 1px,transparent 2px);"></div>
<svg class="a" style="left:39px;top:202px;" width="16" height="13" viewBox="0 0 16 13" shape-rendering="crispEdges"><rect width="16" height="13" fill="#7f96c8"/><rect width="16" height="3" fill="#6080c2"/><path d="M1 1.5h4M6 1.5h4M11 1.5h4" stroke="#a3b8e2" stroke-width="1"/><rect x="15" y="3" width="1" height="10" fill="#30446f"/><rect x="1" y="12" width="15" height="1" fill="#2c406b"/><rect x="1" y="11" width="14" height="1" fill="#93a6cf"/><rect x="5" y="3" width="1" height="8" fill="#a4b5d8"/><rect x="10" y="3" width="1" height="8" fill="#a4b5d8"/><rect x="1" y="5" width="14" height="1" fill="#a4b5d8"/><rect x="1" y="8" width="14" height="1" fill="#a4b5d8"/><rect x="1" y="3" width="4" height="2" fill="#fff"/><rect x="6" y="3" width="4" height="2" fill="#f4f8ff"/><rect x="11" y="3" width="4" height="2" fill="#cfdefa"/><rect x="11" y="3" width="2" height="1" fill="#fff"/><rect x="1" y="6" width="4" height="2" fill="#fff"/><rect x="6" y="6" width="4" height="2" fill="#f4f8ff"/><rect x="11" y="6" width="4" height="2" fill="#cfdefa"/><rect x="11" y="6" width="2" height="1" fill="#fff"/><rect x="1" y="9" width="4" height="2" fill="#fff"/><rect x="6" y="9" width="4" height="2" fill="#f4f8ff"/><rect x="11" y="9" width="4" height="2" fill="#cfdefa"/><rect x="11" y="9" width="2" height="1" fill="#fff"/></svg>
<div class="a" style="left:29px;top:225px;width:9px;height:1px;background:repeating-linear-gradient(90deg,#808080 0,#808080 1px,transparent 1px,transparent 2px);"></div>
<svg class="a" style="left:39px;top:218px;" width="16" height="13" viewBox="0 0 16 13" shape-rendering="crispEdges"><rect width="16" height="13" fill="#7f96c8"/><rect width="16" height="3" fill="#6080c2"/><path d="M1 1.5h4M6 1.5h4M11 1.5h4" stroke="#a3b8e2" stroke-width="1"/><rect x="15" y="3" width="1" height="10" fill="#30446f"/><rect x="1" y="12" width="15" height="1" fill="#2c406b"/><rect x="1" y="11" width="14" height="1" fill="#93a6cf"/><rect x="5" y="3" width="1" height="8" fill="#a4b5d8"/><rect x="10" y="3" width="1" height="8" fill="#a4b5d8"/><rect x="1" y="5" width="14" height="1" fill="#a4b5d8"/><rect x="1" y="8" width="14" height="1" fill="#a4b5d8"/><rect x="1" y="3" width="4" height="2" fill="#fff"/><rect x="6" y="3" width="4" height="2" fill="#f4f8ff"/><rect x="11" y="3" width="4" height="2" fill="#cfdefa"/><rect x="11" y="3" width="2" height="1" fill="#fff"/><rect x="1" y="6" width="4" height="2" fill="#fff"/><rect x="6" y="6" width="4" height="2" fill="#f4f8ff"/><rect x="11" y="6" width="4" height="2" fill="#cfdefa"/><rect x="11" y="6" width="2" height="1" fill="#fff"/><rect x="1" y="9" width="4" height="2" fill="#fff"/><rect x="6" y="9" width="4" height="2" fill="#f4f8ff"/><rect x="11" y="9" width="4" height="2" fill="#cfdefa"/><rect x="11" y="9" width="2" height="1" fill="#fff"/></svg>
<div class="a" style="left:29px;top:241px;width:9px;height:1px;background:repeating-linear-gradient(90deg,#808080 0,#808080 1px,transparent 1px,transparent 2px);"></div>
<svg class="a" style="left:39px;top:234px;" width="16" height="13" viewBox="0 0 16 13" shape-rendering="crispEdges"><rect width="16" height="13" fill="#7f96c8"/><rect width="16" height="3" fill="#6080c2"/><path d="M1 1.5h4M6 1.5h4M11 1.5h4" stroke="#a3b8e2" stroke-width="1"/><rect x="15" y="3" width="1" height="10" fill="#30446f"/><rect x="1" y="12" width="15" height="1" fill="#2c406b"/><rect x="1" y="11" width="14" height="1" fill="#93a6cf"/><rect x="5" y="3" width="1" height="8" fill="#a4b5d8"/><rect x="10" y="3" width="1" height="8" fill="#a4b5d8"/><rect x="1" y="5" width="14" height="1" fill="#a4b5d8"/><rect x="1" y="8" width="14" height="1" fill="#a4b5d8"/><rect x="1" y="3" width="4" height="2" fill="#fff"/><rect x="6" y="3" width="4" height="2" fill="#f4f8ff"/><rect x="11" y="3" width="4" height="2" fill="#cfdefa"/><rect x="11" y="3" width="2" height="1" fill="#fff"/><rect x="1" y="6" width="4" height="2" fill="#fff"/><rect x="6" y="6" width="4" height="2" fill="#f4f8ff"/><rect x="11" y="6" width="4" height="2" fill="#cfdefa"/><rect x="11" y="6" width="2" height="1" fill="#fff"/><rect x="1" y="9" width="4" height="2" fill="#fff"/><rect x="6" y="9" width="4" height="2" fill="#f4f8ff"/><rect x="11" y="9" width="4" height="2" fill="#cfdefa"/><rect x="11" y="9" width="2" height="1" fill="#fff"/></svg>
<div class="a" style="left:29px;top:257px;width:9px;height:1px;background:repeating-linear-gradient(90deg,#808080 0,#808080 1px,transparent 1px,transparent 2px);"></div>
<svg class="a" style="left:39px;top:250px;" width="16" height="13" viewBox="0 0 16 13" shape-rendering="crispEdges"><rect width="16" height="13" fill="#7f96c8"/><rect width="16" height="3" fill="#6080c2"/><path d="M1 1.5h4M6 1.5h4M11 1.5h4" stroke="#a3b8e2" stroke-width="1"/><rect x="15" y="3" width="1" height="10" fill="#30446f"/><rect x="1" y="12" width="15" height="1" fill="#2c406b"/><rect x="1" y="11" width="14" height="1" fill="#93a6cf"/><rect x="5" y="3" width="1" height="8" fill="#a4b5d8"/><rect x="10" y="3" width="1" height="8" fill="#a4b5d8"/><rect x="1" y="5" width="14" height="1" fill="#a4b5d8"/><rect x="1" y="8" width="14" height="1" fill="#a4b5d8"/><rect x="1" y="3" width="4" height="2" fill="#fff"/><rect x="6" y="3" width="4" height="2" fill="#f4f8ff"/><rect x="11" y="3" width="4" height="2" fill="#cfdefa"/><rect x="11" y="3" width="2" height="1" fill="#fff"/><rect x="1" y="6" width="4" height="2" fill="#fff"/><rect x="6" y="6" width="4" height="2" fill="#f4f8ff"/><rect x="11" y="6" width="4" height="2" fill="#cfdefa"/><rect x="11" y="6" width="2" height="1" fill="#fff"/><rect x="1" y="9" width="4" height="2" fill="#fff"/><rect x="6" y="9" width="4" height="2" fill="#f4f8ff"/><rect x="11" y="9" width="4" height="2" fill="#cfdefa"/><rect x="11" y="9" width="2" height="1" fill="#fff"/></svg>
<div class="a" style="left:7px;top:273px;width:11px;height:1px;background:repeating-linear-gradient(90deg,#808080 0,#808080 1px,transparent 1px,transparent 2px);"></div>
<svg class="a" style="left:19px;top:266px;" width="15" height="15" viewBox="0 0 15 15" shape-rendering="crispEdges"><g transform="translate(4,0)"><rect width="11" height="11" fill="#90a7d2"/><rect x="1" y="3" width="9" height="7" fill="#f4f8ff"/><rect x="5" y="3" width="5" height="7" fill="#cfddf8"/><rect x="8" y="3" width="2" height="7" fill="#b3c8f0"/><rect width="11" height="3" fill="#4a7ce4"/><rect x="1" y="1" width="8" height="1" fill="#93b5f5"/><rect y="2" width="11" height="1" fill="#3a6cdc"/><path d="M2 4.5h3M6 4.5h3M2 6.5h3M2 8.5h3M6 8.5h3" stroke="#a9bde6" stroke-width="1"/><rect x="10" y="3" width="1" height="8" fill="#2f4a80"/><rect x="1" y="10" width="10" height="1" fill="#2b4068"/></g><g transform="translate(0,4)"><rect width="11" height="11" fill="#90a7d2"/><rect x="1" y="3" width="9" height="7" fill="#f4f8ff"/><rect x="5" y="3" width="5" height="7" fill="#cfddf8"/><rect x="8" y="3" width="2" height="7" fill="#b3c8f0"/><rect width="11" height="3" fill="#4a7ce4"/><rect x="1" y="1" width="8" height="1" fill="#93b5f5"/><rect y="2" width="11" height="1" fill="#3a6cdc"/><path d="M2 4.5h3M6 4.5h3M2 6.5h3M2 8.5h3M6 8.5h3" stroke="#a9bde6" stroke-width="1"/><rect x="10" y="3" width="1" height="8" fill="#2f4a80"/><rect x="1" y="10" width="10" height="1" fill="#2b4068"/></g><rect x="4" y="4" width="1" height="7" fill="#5a78b8" opacity=".45"/><rect x="4" y="10" width="6" height="1" fill="#2b4068" opacity=".5"/><rect x="5" y="7" width="5" height="3" fill="#c9dafa" opacity=".45"/></svg>
<svg class="a" style="left:3px;top:285px;" width="9" height="9" viewBox="0 0 9 9" shape-rendering="crispEdges"><rect x="0.5" y="0.5" width="8" height="8" fill="#fff" stroke="#858585"/><rect x="2" y="4" width="5" height="1" fill="#000"/><rect x="4" y="2" width="1" height="5" fill="#000"/></svg>
<div class="a" style="left:13px;top:289px;width:5px;height:1px;background:repeating-linear-gradient(90deg,#808080 0,#808080 1px,transparent 1px,transparent 2px);"></div>
<svg class="a" style="left:19px;top:282px;" width="15" height="15" viewBox="0 0 15 15" shape-rendering="crispEdges"><g transform="translate(4,0)"><rect width="11" height="11" fill="#90a7d2"/><rect x="1" y="3" width="9" height="7" fill="#f4f8ff"/><rect x="5" y="3" width="5" height="7" fill="#cfddf8"/><rect x="8" y="3" width="2" height="7" fill="#b3c8f0"/><rect width="11" height="3" fill="#4a7ce4"/><rect x="1" y="1" width="8" height="1" fill="#93b5f5"/><rect y="2" width="11" height="1" fill="#3a6cdc"/><path d="M2 4.5h3M6 4.5h3M2 6.5h3M2 8.5h3M6 8.5h3" stroke="#a9bde6" stroke-width="1"/><rect x="10" y="3" width="1" height="8" fill="#2f4a80"/><rect x="1" y="10" width="10" height="1" fill="#2b4068"/></g><g transform="translate(0,4)"><rect width="11" height="11" fill="#90a7d2"/><rect x="1" y="3" width="9" height="7" fill="#f4f8ff"/><rect x="5" y="3" width="5" height="7" fill="#cfddf8"/><rect x="8" y="3" width="2" height="7" fill="#b3c8f0"/><rect width="11" height="3" fill="#4a7ce4"/><rect x="1" y="1" width="8" height="1" fill="#93b5f5"/><rect y="2" width="11" height="1" fill="#3a6cdc"/><path d="M2 4.5h3M6 4.5h3M2 6.5h3M2 8.5h3M6 8.5h3" stroke="#a9bde6" stroke-width="1"/><rect x="10" y="3" width="1" height="8" fill="#2f4a80"/><rect x="1" y="10" width="10" height="1" fill="#2b4068"/></g><rect x="4" y="4" width="1" height="7" fill="#5a78b8" opacity=".45"/><rect x="4" y="10" width="6" height="1" fill="#2b4068" opacity=".5"/><rect x="5" y="7" width="5" height="3" fill="#c9dafa" opacity=".45"/></svg>
<svg class="a" style="left:3px;top:301px;" width="9" height="9" viewBox="0 0 9 9" shape-rendering="crispEdges"><rect x="0.5" y="0.5" width="8" height="8" fill="#fff" stroke="#858585"/><rect x="2" y="4" width="5" height="1" fill="#000"/></svg>
<div class="a" style="left:13px;top:305px;width:5px;height:1px;background:repeating-linear-gradient(90deg,#808080 0,#808080 1px,transparent 1px,transparent 2px);"></div>
<svg class="a" style="left:19px;top:298px;" width="15" height="15" viewBox="0 0 15 15" shape-rendering="crispEdges"><g transform="translate(4,0)"><rect width="11" height="11" fill="#90a7d2"/><rect x="1" y="3" width="9" height="7" fill="#f4f8ff"/><rect x="5" y="3" width="5" height="7" fill="#cfddf8"/><rect x="8" y="3" width="2" height="7" fill="#b3c8f0"/><rect width="11" height="3" fill="#4a7ce4"/><rect x="1" y="1" width="8" height="1" fill="#93b5f5"/><rect y="2" width="11" height="1" fill="#3a6cdc"/><path d="M2 4.5h3M6 4.5h3M2 6.5h3M2 8.5h3M6 8.5h3" stroke="#a9bde6" stroke-width="1"/><rect x="10" y="3" width="1" height="8" fill="#2f4a80"/><rect x="1" y="10" width="10" height="1" fill="#2b4068"/></g><g transform="translate(0,4)"><rect width="11" height="11" fill="#90a7d2"/><rect x="1" y="3" width="9" height="7" fill="#f4f8ff"/><rect x="5" y="3" width="5" height="7" fill="#cfddf8"/><rect x="8" y="3" width="2" height="7" fill="#b3c8f0"/><rect width="11" height="3" fill="#4a7ce4"/><rect x="1" y="1" width="8" height="1" fill="#93b5f5"/><rect y="2" width="11" height="1" fill="#3a6cdc"/><path d="M2 4.5h3M6 4.5h3M2 6.5h3M2 8.5h3M6 8.5h3" stroke="#a9bde6" stroke-width="1"/><rect x="10" y="3" width="1" height="8" fill="#2f4a80"/><rect x="1" y="10" width="10" height="1" fill="#2b4068"/></g><rect x="4" y="4" width="1" height="7" fill="#5a78b8" opacity=".45"/><rect x="4" y="10" width="6" height="1" fill="#2b4068" opacity=".5"/><rect x="5" y="7" width="5" height="3" fill="#c9dafa" opacity=".45"/></svg>
<div class="a" style="left:29px;top:321px;width:9px;height:1px;background:repeating-linear-gradient(90deg,#808080 0,#808080 1px,transparent 1px,transparent 2px);"></div>
<svg class="a" style="left:39px;top:314px;" width="16" height="13" viewBox="0 0 16 13" shape-rendering="crispEdges"><rect width="16" height="13" fill="#7f96c8"/><rect width="16" height="3" fill="#6080c2"/><path d="M1 1.5h4M6 1.5h4M11 1.5h4" stroke="#a3b8e2" stroke-width="1"/><rect x="15" y="3" width="1" height="10" fill="#30446f"/><rect x="1" y="12" width="15" height="1" fill="#2c406b"/><rect x="1" y="11" width="14" height="1" fill="#93a6cf"/><rect x="5" y="3" width="1" height="8" fill="#a4b5d8"/><rect x="10" y="3" width="1" height="8" fill="#a4b5d8"/><rect x="1" y="5" width="14" height="1" fill="#a4b5d8"/><rect x="1" y="8" width="14" height="1" fill="#a4b5d8"/><rect x="1" y="3" width="4" height="2" fill="#fff"/><rect x="6" y="3" width="4" height="2" fill="#f4f8ff"/><rect x="11" y="3" width="4" height="2" fill="#cfdefa"/><rect x="11" y="3" width="2" height="1" fill="#fff"/><rect x="1" y="6" width="4" height="2" fill="#fff"/><rect x="6" y="6" width="4" height="2" fill="#f4f8ff"/><rect x="11" y="6" width="4" height="2" fill="#cfdefa"/><rect x="11" y="6" width="2" height="1" fill="#fff"/><rect x="1" y="9" width="4" height="2" fill="#fff"/><rect x="6" y="9" width="4" height="2" fill="#f4f8ff"/><rect x="11" y="9" width="4" height="2" fill="#cfdefa"/><rect x="11" y="9" width="2" height="1" fill="#fff"/></svg>
<div class="a" style="left:29px;top:337px;width:9px;height:1px;background:repeating-linear-gradient(90deg,#808080 0,#808080 1px,transparent 1px,transparent 2px);"></div>
<svg class="a" style="left:39px;top:330px;" width="16" height="13" viewBox="0 0 16 13" shape-rendering="crispEdges"><rect width="16" height="13" fill="#7f96c8"/><rect width="16" height="3" fill="#6080c2"/><path d="M1 1.5h4M6 1.5h4M11 1.5h4" stroke="#a3b8e2" stroke-width="1"/><rect x="15" y="3" width="1" height="10" fill="#30446f"/><rect x="1" y="12" width="15" height="1" fill="#2c406b"/><rect x="1" y="11" width="14" height="1" fill="#93a6cf"/><rect x="5" y="3" width="1" height="8" fill="#a4b5d8"/><rect x="10" y="3" width="1" height="8" fill="#a4b5d8"/><rect x="1" y="5" width="14" height="1" fill="#a4b5d8"/><rect x="1" y="8" width="14" height="1" fill="#a4b5d8"/><rect x="1" y="3" width="4" height="2" fill="#fff"/><rect x="6" y="3" width="4" height="2" fill="#f4f8ff"/><rect x="11" y="3" width="4" height="2" fill="#cfdefa"/><rect x="11" y="3" width="2" height="1" fill="#fff"/><rect x="1" y="6" width="4" height="2" fill="#fff"/><rect x="6" y="6" width="4" height="2" fill="#f4f8ff"/><rect x="11" y="6" width="4" height="2" fill="#cfdefa"/><rect x="11" y="6" width="2" height="1" fill="#fff"/><rect x="1" y="9" width="4" height="2" fill="#fff"/><rect x="6" y="9" width="4" height="2" fill="#f4f8ff"/><rect x="11" y="9" width="4" height="2" fill="#cfdefa"/><rect x="11" y="9" width="2" height="1" fill="#fff"/></svg>
<div class="a" style="left:58px;top:329px;width:154px;height:16px;background:#0078d7;"></div>
<div class="a" style="left:29px;top:353px;width:9px;height:1px;background:repeating-linear-gradient(90deg,#808080 0,#808080 1px,transparent 1px,transparent 2px);"></div>
<svg class="a" style="left:39px;top:346px;" width="16" height="13" viewBox="0 0 16 13" shape-rendering="crispEdges"><rect width="16" height="13" fill="#7f96c8"/><rect width="16" height="3" fill="#6080c2"/><path d="M1 1.5h4M6 1.5h4M11 1.5h4" stroke="#a3b8e2" stroke-width="1"/><rect x="15" y="3" width="1" height="10" fill="#30446f"/><rect x="1" y="12" width="15" height="1" fill="#2c406b"/><rect x="1" y="11" width="14" height="1" fill="#93a6cf"/><rect x="5" y="3" width="1" height="8" fill="#a4b5d8"/><rect x="10" y="3" width="1" height="8" fill="#a4b5d8"/><rect x="1" y="5" width="14" height="1" fill="#a4b5d8"/><rect x="1" y="8" width="14" height="1" fill="#a4b5d8"/><rect x="1" y="3" width="4" height="2" fill="#fff"/><rect x="6" y="3" width="4" height="2" fill="#f4f8ff"/><rect x="11" y="3" width="4" height="2" fill="#cfdefa"/><rect x="11" y="3" width="2" height="1" fill="#fff"/><rect x="1" y="6" width="4" height="2" fill="#fff"/><rect x="6" y="6" width="4" height="2" fill="#f4f8ff"/><rect x="11" y="6" width="4" height="2" fill="#cfdefa"/><rect x="11" y="6" width="2" height="1" fill="#fff"/><rect x="1" y="9" width="4" height="2" fill="#fff"/><rect x="6" y="9" width="4" height="2" fill="#f4f8ff"/><rect x="11" y="9" width="4" height="2" fill="#cfdefa"/><rect x="11" y="9" width="2" height="1" fill="#fff"/></svg>
<svg class="a" style="left:3px;top:365px;" width="9" height="9" viewBox="0 0 9 9" shape-rendering="crispEdges"><rect x="0.5" y="0.5" width="8" height="8" fill="#fff" stroke="#858585"/><rect x="2" y="4" width="5" height="1" fill="#000"/><rect x="4" y="2" width="1" height="5" fill="#000"/></svg>
<div class="a" style="left:13px;top:369px;width:5px;height:1px;background:repeating-linear-gradient(90deg,#808080 0,#808080 1px,transparent 1px,transparent 2px);"></div>
<svg class="a" style="left:19px;top:362px;" width="15" height="15" viewBox="0 0 15 15" shape-rendering="crispEdges"><g transform="translate(4,0)"><rect width="11" height="11" fill="#90a7d2"/><rect x="1" y="3" width="9" height="7" fill="#f4f8ff"/><rect x="5" y="3" width="5" height="7" fill="#cfddf8"/><rect x="8" y="3" width="2" height="7" fill="#b3c8f0"/><rect width="11" height="3" fill="#4a7ce4"/><rect x="1" y="1" width="8" height="1" fill="#93b5f5"/><rect y="2" width="11" height="1" fill="#3a6cdc"/><path d="M2 4.5h3M6 4.5h3M2 6.5h3M2 8.5h3M6 8.5h3" stroke="#a9bde6" stroke-width="1"/><rect x="10" y="3" width="1" height="8" fill="#2f4a80"/><rect x="1" y="10" width="10" height="1" fill="#2b4068"/></g><g transform="translate(0,4)"><rect width="11" height="11" fill="#90a7d2"/><rect x="1" y="3" width="9" height="7" fill="#f4f8ff"/><rect x="5" y="3" width="5" height="7" fill="#cfddf8"/><rect x="8" y="3" width="2" height="7" fill="#b3c8f0"/><rect width="11" height="3" fill="#4a7ce4"/><rect x="1" y="1" width="8" height="1" fill="#93b5f5"/><rect y="2" width="11" height="1" fill="#3a6cdc"/><path d="M2 4.5h3M6 4.5h3M2 6.5h3M2 8.5h3M6 8.5h3" stroke="#a9bde6" stroke-width="1"/><rect x="10" y="3" width="1" height="8" fill="#2f4a80"/><rect x="1" y="10" width="10" height="1" fill="#2b4068"/></g><rect x="4" y="4" width="1" height="7" fill="#5a78b8" opacity=".45"/><rect x="4" y="10" width="6" height="1" fill="#2b4068" opacity=".5"/><rect x="5" y="7" width="5" height="3" fill="#c9dafa" opacity=".45"/></svg>
<svg class="a" style="left:3px;top:381px;" width="9" height="9" viewBox="0 0 9 9" shape-rendering="crispEdges"><rect x="0.5" y="0.5" width="8" height="8" fill="#fff" stroke="#858585"/><rect x="2" y="4" width="5" height="1" fill="#000"/><rect x="4" y="2" width="1" height="5" fill="#000"/></svg>
<div class="a" style="left:13px;top:385px;width:5px;height:1px;background:repeating-linear-gradient(90deg,#808080 0,#808080 1px,transparent 1px,transparent 2px);"></div>
<svg class="a" style="left:19px;top:378px;" width="15" height="15" viewBox="0 0 15 15" shape-rendering="crispEdges"><g transform="translate(4,0)"><rect width="11" height="11" fill="#90a7d2"/><rect x="1" y="3" width="9" height="7" fill="#f4f8ff"/><rect x="5" y="3" width="5" height="7" fill="#cfddf8"/><rect x="8" y="3" width="2" height="7" fill="#b3c8f0"/><rect width="11" height="3" fill="#4a7ce4"/><rect x="1" y="1" width="8" height="1" fill="#93b5f5"/><rect y="2" width="11" height="1" fill="#3a6cdc"/><path d="M2 4.5h3M6 4.5h3M2 6.5h3M2 8.5h3M6 8.5h3" stroke="#a9bde6" stroke-width="1"/><rect x="10" y="3" width="1" height="8" fill="#2f4a80"/><rect x="1" y="10" width="10" height="1" fill="#2b4068"/></g><g transform="translate(0,4)"><rect width="11" height="11" fill="#90a7d2"/><rect x="1" y="3" width="9" height="7" fill="#f4f8ff"/><rect x="5" y="3" width="5" height="7" fill="#cfddf8"/><rect x="8" y="3" width="2" height="7" fill="#b3c8f0"/><rect width="11" height="3" fill="#4a7ce4"/><rect x="1" y="1" width="8" height="1" fill="#93b5f5"/><rect y="2" width="11" height="1" fill="#3a6cdc"/><path d="M2 4.5h3M6 4.5h3M2 6.5h3M2 8.5h3M6 8.5h3" stroke="#a9bde6" stroke-width="1"/><rect x="10" y="3" width="1" height="8" fill="#2f4a80"/><rect x="1" y="10" width="10" height="1" fill="#2b4068"/></g><rect x="4" y="4" width="1" height="7" fill="#5a78b8" opacity=".45"/><rect x="4" y="10" width="6" height="1" fill="#2b4068" opacity=".5"/><rect x="5" y="7" width="5" height="3" fill="#c9dafa" opacity=".45"/></svg>
<svg class="a" style="left:3px;top:397px;" width="9" height="9" viewBox="0 0 9 9" shape-rendering="crispEdges"><rect x="0.5" y="0.5" width="8" height="8" fill="#fff" stroke="#858585"/><rect x="2" y="4" width="5" height="1" fill="#000"/><rect x="4" y="2" width="1" height="5" fill="#000"/></svg>
<div class="a" style="left:13px;top:401px;width:5px;height:1px;background:repeating-linear-gradient(90deg,#808080 0,#808080 1px,transparent 1px,transparent 2px);"></div>
<svg class="a" style="left:19px;top:394px;" width="15" height="15" viewBox="0 0 15 15" shape-rendering="crispEdges"><g transform="translate(4,0)"><rect width="11" height="11" fill="#90a7d2"/><rect x="1" y="3" width="9" height="7" fill="#f4f8ff"/><rect x="5" y="3" width="5" height="7" fill="#cfddf8"/><rect x="8" y="3" width="2" height="7" fill="#b3c8f0"/><rect width="11" height="3" fill="#4a7ce4"/><rect x="1" y="1" width="8" height="1" fill="#93b5f5"/><rect y="2" width="11" height="1" fill="#3a6cdc"/><path d="M2 4.5h3M6 4.5h3M2 6.5h3M2 8.5h3M6 8.5h3" stroke="#a9bde6" stroke-width="1"/><rect x="10" y="3" width="1" height="8" fill="#2f4a80"/><rect x="1" y="10" width="10" height="1" fill="#2b4068"/></g><g transform="translate(0,4)"><rect width="11" height="11" fill="#90a7d2"/><rect x="1" y="3" width="9" height="7" fill="#f4f8ff"/><rect x="5" y="3" width="5" height="7" fill="#cfddf8"/><rect x="8" y="3" width="2" height="7" fill="#b3c8f0"/><rect width="11" height="3" fill="#4a7ce4"/><rect x="1" y="1" width="8" height="1" fill="#93b5f5"/><rect y="2" width="11" height="1" fill="#3a6cdc"/><path d="M2 4.5h3M6 4.5h3M2 6.5h3M2 8.5h3M6 8.5h3" stroke="#a9bde6" stroke-width="1"/><rect x="10" y="3" width="1" height="8" fill="#2f4a80"/><rect x="1" y="10" width="10" height="1" fill="#2b4068"/></g><rect x="4" y="4" width="1" height="7" fill="#5a78b8" opacity=".45"/><rect x="4" y="10" width="6" height="1" fill="#2b4068" opacity=".5"/><rect x="5" y="7" width="5" height="3" fill="#c9dafa" opacity=".45"/></svg>
<svg class="a" style="left:3px;top:413px;" width="9" height="9" viewBox="0 0 9 9" shape-rendering="crispEdges"><rect x="0.5" y="0.5" width="8" height="8" fill="#fff" stroke="#858585"/><rect x="2" y="4" width="5" height="1" fill="#000"/><rect x="4" y="2" width="1" height="5" fill="#000"/></svg>
<div class="a" style="left:13px;top:417px;width:5px;height:1px;background:repeating-linear-gradient(90deg,#808080 0,#808080 1px,transparent 1px,transparent 2px);"></div>
<svg class="a" style="left:19px;top:410px;" width="15" height="15" viewBox="0 0 15 15" shape-rendering="crispEdges"><g transform="translate(4,0)"><rect width="11" height="11" fill="#90a7d2"/><rect x="1" y="3" width="9" height="7" fill="#f4f8ff"/><rect x="5" y="3" width="5" height="7" fill="#cfddf8"/><rect x="8" y="3" width="2" height="7" fill="#b3c8f0"/><rect width="11" height="3" fill="#4a7ce4"/><rect x="1" y="1" width="8" height="1" fill="#93b5f5"/><rect y="2" width="11" height="1" fill="#3a6cdc"/><path d="M2 4.5h3M6 4.5h3M2 6.5h3M2 8.5h3M6 8.5h3" stroke="#a9bde6" stroke-width="1"/><rect x="10" y="3" width="1" height="8" fill="#2f4a80"/><rect x="1" y="10" width="10" height="1" fill="#2b4068"/></g><g transform="translate(0,4)"><rect width="11" height="11" fill="#90a7d2"/><rect x="1" y="3" width="9" height="7" fill="#f4f8ff"/><rect x="5" y="3" width="5" height="7" fill="#cfddf8"/><rect x="8" y="3" width="2" height="7" fill="#b3c8f0"/><rect width="11" height="3" fill="#4a7ce4"/><rect x="1" y="1" width="8" height="1" fill="#93b5f5"/><rect y="2" width="11" height="1" fill="#3a6cdc"/><path d="M2 4.5h3M6 4.5h3M2 6.5h3M2 8.5h3M6 8.5h3" stroke="#a9bde6" stroke-width="1"/><rect x="10" y="3" width="1" height="8" fill="#2f4a80"/><rect x="1" y="10" width="10" height="1" fill="#2b4068"/></g><rect x="4" y="4" width="1" height="7" fill="#5a78b8" opacity=".45"/><rect x="4" y="10" width="6" height="1" fill="#2b4068" opacity=".5"/><rect x="5" y="7" width="5" height="3" fill="#c9dafa" opacity=".45"/></svg>
<svg class="a" style="left:3px;top:429px;" width="9" height="9" viewBox="0 0 9 9" shape-rendering="crispEdges"><rect x="0.5" y="0.5" width="8" height="8" fill="#fff" stroke="#858585"/><rect x="2" y="4" width="5" height="1" fill="#000"/><rect x="4" y="2" width="1" height="5" fill="#000"/></svg>
<div class="a" style="left:13px;top:433px;width:5px;height:1px;background:repeating-linear-gradient(90deg,#808080 0,#808080 1px,transparent 1px,transparent 2px);"></div>
<svg class="a" style="left:19px;top:426px;" width="15" height="15" viewBox="0 0 15 15" shape-rendering="crispEdges"><g transform="translate(4,0)"><rect width="11" height="11" fill="#90a7d2"/><rect x="1" y="3" width="9" height="7" fill="#f4f8ff"/><rect x="5" y="3" width="5" height="7" fill="#cfddf8"/><rect x="8" y="3" width="2" height="7" fill="#b3c8f0"/><rect width="11" height="3" fill="#4a7ce4"/><rect x="1" y="1" width="8" height="1" fill="#93b5f5"/><rect y="2" width="11" height="1" fill="#3a6cdc"/><path d="M2 4.5h3M6 4.5h3M2 6.5h3M2 8.5h3M6 8.5h3" stroke="#a9bde6" stroke-width="1"/><rect x="10" y="3" width="1" height="8" fill="#2f4a80"/><rect x="1" y="10" width="10" height="1" fill="#2b4068"/></g><g transform="translate(0,4)"><rect width="11" height="11" fill="#90a7d2"/><rect x="1" y="3" width="9" height="7" fill="#f4f8ff"/><rect x="5" y="3" width="5" height="7" fill="#cfddf8"/><rect x="8" y="3" width="2" height="7" fill="#b3c8f0"/><rect width="11" height="3" fill="#4a7ce4"/><rect x="1" y="1" width="8" height="1" fill="#93b5f5"/><rect y="2" width="11" height="1" fill="#3a6cdc"/><path d="M2 4.5h3M6 4.5h3M2 6.5h3M2 8.5h3M6 8.5h3" stroke="#a9bde6" stroke-width="1"/><rect x="10" y="3" width="1" height="8" fill="#2f4a80"/><rect x="1" y="10" width="10" height="1" fill="#2b4068"/></g><rect x="4" y="4" width="1" height="7" fill="#5a78b8" opacity=".45"/><rect x="4" y="10" width="6" height="1" fill="#2b4068" opacity=".5"/><rect x="5" y="7" width="5" height="3" fill="#c9dafa" opacity=".45"/></svg>
<svg class="a" style="left:3px;top:445px;" width="9" height="9" viewBox="0 0 9 9" shape-rendering="crispEdges"><rect x="0.5" y="0.5" width="8" height="8" fill="#fff" stroke="#858585"/><rect x="2" y="4" width="5" height="1" fill="#000"/><rect x="4" y="2" width="1" height="5" fill="#000"/></svg>
<div class="a" style="left:13px;top:449px;width:5px;height:1px;background:repeating-linear-gradient(90deg,#808080 0,#808080 1px,transparent 1px,transparent 2px);"></div>
<svg class="a" style="left:19px;top:442px;" width="15" height="15" viewBox="0 0 15 15" shape-rendering="crispEdges"><g transform="translate(4,0)"><rect width="11" height="11" fill="#90a7d2"/><rect x="1" y="3" width="9" height="7" fill="#f4f8ff"/><rect x="5" y="3" width="5" height="7" fill="#cfddf8"/><rect x="8" y="3" width="2" height="7" fill="#b3c8f0"/><rect width="11" height="3" fill="#4a7ce4"/><rect x="1" y="1" width="8" height="1" fill="#93b5f5"/><rect y="2" width="11" height="1" fill="#3a6cdc"/><path d="M2 4.5h3M6 4.5h3M2 6.5h3M2 8.5h3M6 8.5h3" stroke="#a9bde6" stroke-width="1"/><rect x="10" y="3" width="1" height="8" fill="#2f4a80"/><rect x="1" y="10" width="10" height="1" fill="#2b4068"/></g><g transform="translate(0,4)"><rect width="11" height="11" fill="#90a7d2"/><rect x="1" y="3" width="9" height="7" fill="#f4f8ff"/><rect x="5" y="3" width="5" height="7" fill="#cfddf8"/><rect x="8" y="3" width="2" height="7" fill="#b3c8f0"/><rect width="11" height="3" fill="#4a7ce4"/><rect x="1" y="1" width="8" height="1" fill="#93b5f5"/><rect y="2" width="11" height="1" fill="#3a6cdc"/><path d="M2 4.5h3M6 4.5h3M2 6.5h3M2 8.5h3M6 8.5h3" stroke="#a9bde6" stroke-width="1"/><rect x="10" y="3" width="1" height="8" fill="#2f4a80"/><rect x="1" y="10" width="10" height="1" fill="#2b4068"/></g><rect x="4" y="4" width="1" height="7" fill="#5a78b8" opacity=".45"/><rect x="4" y="10" width="6" height="1" fill="#2b4068" opacity=".5"/><rect x="5" y="7" width="5" height="3" fill="#c9dafa" opacity=".45"/></svg>
<svg class="a" style="left:3px;top:461px;" width="9" height="9" viewBox="0 0 9 9" shape-rendering="crispEdges"><rect x="0.5" y="0.5" width="8" height="8" fill="#fff" stroke="#858585"/><rect x="2" y="4" width="5" height="1" fill="#000"/><rect x="4" y="2" width="1" height="5" fill="#000"/></svg>
<div class="a" style="left:13px;top:465px;width:5px;height:1px;background:repeating-linear-gradient(90deg,#808080 0,#808080 1px,transparent 1px,transparent 2px);"></div>
<svg class="a" style="left:19px;top:458px;" width="15" height="15" viewBox="0 0 15 15" shape-rendering="crispEdges"><g transform="translate(4,0)"><rect width="11" height="11" fill="#90a7d2"/><rect x="1" y="3" width="9" height="7" fill="#f4f8ff"/><rect x="5" y="3" width="5" height="7" fill="#cfddf8"/><rect x="8" y="3" width="2" height="7" fill="#b3c8f0"/><rect width="11" height="3" fill="#4a7ce4"/><rect x="1" y="1" width="8" height="1" fill="#93b5f5"/><rect y="2" width="11" height="1" fill="#3a6cdc"/><path d="M2 4.5h3M6 4.5h3M2 6.5h3M2 8.5h3M6 8.5h3" stroke="#a9bde6" stroke-width="1"/><rect x="10" y="3" width="1" height="8" fill="#2f4a80"/><rect x="1" y="10" width="10" height="1" fill="#2b4068"/></g><g transform="translate(0,4)"><rect width="11" height="11" fill="#90a7d2"/><rect x="1" y="3" width="9" height="7" fill="#f4f8ff"/><rect x="5" y="3" width="5" height="7" fill="#cfddf8"/><rect x="8" y="3" width="2" height="7" fill="#b3c8f0"/><rect width="11" height="3" fill="#4a7ce4"/><rect x="1" y="1" width="8" height="1" fill="#93b5f5"/><rect y="2" width="11" height="1" fill="#3a6cdc"/><path d="M2 4.5h3M6 4.5h3M2 6.5h3M2 8.5h3M6 8.5h3" stroke="#a9bde6" stroke-width="1"/><rect x="10" y="3" width="1" height="8" fill="#2f4a80"/><rect x="1" y="10" width="10" height="1" fill="#2b4068"/></g><rect x="4" y="4" width="1" height="7" fill="#5a78b8" opacity=".45"/><rect x="4" y="10" width="6" height="1" fill="#2b4068" opacity=".5"/><rect x="5" y="7" width="5" height="3" fill="#c9dafa" opacity=".45"/></svg>
<svg class="a" style="left:3px;top:477px;" width="9" height="9" viewBox="0 0 9 9" shape-rendering="crispEdges"><rect x="0.5" y="0.5" width="8" height="8" fill="#fff" stroke="#858585"/><rect x="2" y="4" width="5" height="1" fill="#000"/><rect x="4" y="2" width="1" height="5" fill="#000"/></svg>
<div class="a" style="left:13px;top:481px;width:5px;height:1px;background:repeating-linear-gradient(90deg,#808080 0,#808080 1px,transparent 1px,transparent 2px);"></div>
<svg class="a" style="left:19px;top:474px;" width="15" height="15" viewBox="0 0 15 15" shape-rendering="crispEdges"><g transform="translate(4,0)"><rect width="11" height="11" fill="#90a7d2"/><rect x="1" y="3" width="9" height="7" fill="#f4f8ff"/><rect x="5" y="3" width="5" height="7" fill="#cfddf8"/><rect x="8" y="3" width="2" height="7" fill="#b3c8f0"/><rect width="11" height="3" fill="#4a7ce4"/><rect x="1" y="1" width="8" height="1" fill="#93b5f5"/><rect y="2" width="11" height="1" fill="#3a6cdc"/><path d="M2 4.5h3M6 4.5h3M2 6.5h3M2 8.5h3M6 8.5h3" stroke="#a9bde6" stroke-width="1"/><rect x="10" y="3" width="1" height="8" fill="#2f4a80"/><rect x="1" y="10" width="10" height="1" fill="#2b4068"/></g><g transform="translate(0,4)"><rect width="11" height="11" fill="#90a7d2"/><rect x="1" y="3" width="9" height="7" fill="#f4f8ff"/><rect x="5" y="3" width="5" height="7" fill="#cfddf8"/><rect x="8" y="3" width="2" height="7" fill="#b3c8f0"/><rect width="11" height="3" fill="#4a7ce4"/><rect x="1" y="1" width="8" height="1" fill="#93b5f5"/><rect y="2" width="11" height="1" fill="#3a6cdc"/><path d="M2 4.5h3M6 4.5h3M2 6.5h3M2 8.5h3M6 8.5h3" stroke="#a9bde6" stroke-width="1"/><rect x="10" y="3" width="1" height="8" fill="#2f4a80"/><rect x="1" y="10" width="10" height="1" fill="#2b4068"/></g><rect x="4" y="4" width="1" height="7" fill="#5a78b8" opacity=".45"/><rect x="4" y="10" width="6" height="1" fill="#2b4068" opacity=".5"/><rect x="5" y="7" width="5" height="3" fill="#c9dafa" opacity=".45"/></svg>
<div class="a" style="left:220px;top:557px;width:637px;height:9px;overflow:hidden;"><span class="t b" style="right:460px;top:2px;">C_FC</span><span class="t b" style="left:184.5px;top:2px;letter-spacing:.2px;">0.07</span></div>
<span class="t b" id="t0" style="left:40px;top:121px;letter-spacing:-0.157px;">Main Group</span>
<span class="t" id="t1" style="left:59.8px;top:137px;transform:scaleX(0.8940);">Project</span>
<span class="t" id="t2" style="left:59.8px;top:153px;transform:scaleX(0.8918);">Point</span>
<span class="t" id="t3" style="left:59.8px;top:169px;transform:scaleX(0.8947);">Strata Main</span>
<span class="t" id="t4" style="left:59.8px;top:185px;transform:scaleX(0.8802);">Strata Details</span>
<span class="t" id="t5" style="left:59.8px;top:201px;transform:scaleX(0.8961);">Consistency / Density</span>
<span class="t" id="t6" style="left:59.8px;top:217px;transform:scaleX(0.8924);">Depth Remarks</span>
<span class="t" id="t7" style="left:59.8px;top:233px;transform:scaleX(0.8700);">Sample</span>
<span class="t" id="t8" style="left:59.8px;top:249px;transform:scaleX(0.8657);">Alignments</span>
<span class="t b" id="t9" style="left:40px;top:265px;letter-spacing:0.095px;">Site Map</span>
<span class="t b" id="t10" style="left:40px;top:281px;transform:scaleX(0.9417);">CPT</span>
<span class="t b" id="t11" style="left:40px;top:297px;letter-spacing:-0.036px;">CPT-Liquefaction</span>
<span class="t" id="t12" style="left:59.8px;top:313px;transform:scaleX(0.9036);">Liquefaction Data</span>
<span class="t" id="t13" style="left:59.8px;top:329px;color:#fff;transform:scaleX(0.8825);">Liquefaction Project Parameters</span>
<span class="t" id="t14" style="left:59.8px;top:345px;transform:scaleX(0.8795);">Liquefaction Point Parameters</span>
<span class="t b" id="t15" style="left:40px;top:361px;letter-spacing:-0.111px;">CPT-Foundation</span>
<span class="t b" id="t16" style="left:40px;top:377px;letter-spacing:-0.170px;">CPT-Configuration</span>
<span class="t b" id="t17" style="left:40px;top:393px;letter-spacing:-0.014px;">IS-BH</span>
<span class="t b" id="t18" style="left:40px;top:409px;letter-spacing:-0.056px;">Lab-Strength/Consol</span>
<span class="t b" id="t19" style="left:40px;top:425px;transform:scaleX(0.9316);">Lists</span>
<span class="t b" id="t20" style="left:40px;top:441px;transform:scaleX(0.9264);">AGS</span>
<span class="t b" id="t21" style="left:40px;top:457px;transform:scaleX(0.9508);">Options</span>
<span class="t b" id="t22" style="left:40px;top:473px;transform:scaleX(0.9340);">Analysis</span>
<span class="t b v" id="t23" style="left:404.5px;top:141px;">9.81</span>
<span class="t b r" id="t24" style="right:701.3px;top:141px;letter-spacing:0.161px;">g (m/s2)</span>
<span class="t b v" id="t25" style="left:404.5px;top:160px;">0.3</span>
<span class="t b r" id="t26" style="right:701.3px;top:160px;">PGA</span>
<span class="t b v" id="t27" style="left:404.5px;top:179px;">7.5</span>
<span class="t b r" id="t28" style="right:701.3px;top:179px;">M</span>
<span class="t b v" id="t29" style="left:404.5px;top:198px;">2.1</span>
<span class="t b r" id="t30" style="right:701.3px;top:198px;">dw (m)</span>
<span class="t b v" id="t31" style="left:404.5px;top:217px;">1</span>
<span class="t b r" id="t32" style="right:701.3px;top:217px;">Hf (m)</span>
<span class="t b v" id="t33" style="left:404.5px;top:236px;">20</span>
<span class="t b r" id="t34" style="right:701.3px;top:236px;letter-spacing:0.106px;">Fill Unit Weight (kN/m3)</span>
<span class="t b v" id="t35" style="left:404.5px;top:255px;">0.001</span>
<span class="t b r" id="t36" style="right:701.3px;top:255px;letter-spacing:-0.224px;">Minimum Layer Thickness (m)</span>
<span class="t b v" id="t37" style="left:404.5px;top:274px;">1</span>
<span class="t b r" id="t38" style="right:701.3px;top:274px;">K alpha</span>
<span class="t b v" id="t39" style="left:404.5px;top:293px;">28</span>
<span class="t b r" id="t40" style="right:701.3px;top:293px;">phi&#x27; (deg)</span>
<span class="t b v" id="t41" style="left:404.5px;top:312px;">0.7</span>
<span class="t b r" id="t42" style="right:701.3px;top:312px;">K0</span>
<span class="t b v" id="t43" style="left:404.5px;top:331px;">300</span>
<span class="t b r" id="t44" style="right:701.3px;top:331px;">Ir</span>
<span class="t b v" id="t45" style="left:404.5px;top:350px;">41</span>
<span class="t b r" id="t46" style="right:701.3px;top:350px;">k</span>
<span class="t b v" id="t47" style="left:404.5px;top:369px;">6</span>
<span class="t b r" id="t48" style="right:701.3px;top:369px;">m</span>
<span class="t b v" id="t49" style="left:404.5px;top:388px;">1.3</span>
<span class="t b r" id="t50" style="right:701.3px;top:388px;">Mtc</span>
<span class="t b v" id="t51" style="left:404.5px;top:407px;">250</span>
<span class="t b r" id="t52" style="right:701.3px;top:407px;">H</span>
<span class="t b v" id="t53" style="left:404.5px;top:426px;">0.013</span>
<span class="t b r" id="t54" style="right:701.3px;top:426px;">Lambda</span>
<span class="t b v" id="t55" style="left:404.5px;top:445px;">0.15</span>
<span class="t b r" id="t56" style="right:701.3px;top:445px;">nu</span>
<span class="t b v" id="t57" style="left:404.5px;top:464px;">0.3</span>
<span class="t b r" id="t58" style="right:701.3px;top:464px;">N</span>
<span class="t b v" id="t59" style="left:404.5px;top:483px;">1.25</span>
<span class="t b r" id="t60" style="right:701.3px;top:483px;">M</span>
<span class="t b v" id="t61" style="left:404.5px;top:502px;">-0.5</span>
<span class="t b r" id="t62" style="right:701.3px;top:502px;">n</span>
<span class="t b" id="t63" style="left:404.5px;top:519px;">Robertson 2009</span>
<span class="t b r" id="t64" style="right:701.3px;top:521px;">SBT Iteration Method</span>
<span class="t b v" id="t65" style="left:404.5px;top:540px;">2.6</span>
<span class="t b r" id="t66" style="right:701.3px;top:540px;">Ic Break Point</span>
<span class="t" id="t67" style="left:29.8px;top:8px;transform:scaleX(0.9345);">INPUT -</span>
<span class="t" id="t68" style="left:78px;top:8px;transform:scaleX(0.9544);">c:\users</span>
<span class="t" id="t69" style="left:118.1px;top:8px;letter-spacing:0.102px;">\raul.miranda.datgel</span>
<span class="t" id="t70" style="left:226.2px;top:8px;letter-spacing:0.328px;">\desktop</span>
<span class="t" id="t71" style="left:274.2px;top:8px;letter-spacing:0.352px;">\cpt tool</span>
<span class="t" id="t72" style="left:319.4px;top:8px;letter-spacing:0.338px;">\datgel</span>
<span class="t" id="t73" style="left:361.7px;top:8px;letter-spacing:-0.072px;">cpt</span>
<span class="t" id="t74" style="left:380.6px;top:8px;letter-spacing:0.385px;">tool</span>
<span class="t" id="t75" style="left:405.5px;top:8px;letter-spacing:-0.010px;">dgd</span>
<span class="t" id="t76" style="left:429.5px;top:8px;transform:scaleX(0.8090);">3.18.4</span>
<span class="t" id="t77" style="left:461.4px;top:8px;letter-spacing:-0.069px;">si.gpj</span>
<span class="t" id="t78" style="left:496.4px;top:8px;transform:scaleX(0.7625);">CPT_</span>
<span class="t" id="t79" style="left:519.8px;top:8px;transform:scaleX(0.9456);">LIQ_</span>
<span class="t" id="t80" style="left:544.4px;top:8px;transform:scaleX(0.8407);">PROJECT_</span>
<span class="t" id="t81" style="left:597.1px;top:8px;transform:scaleX(0.9035);">PARAMETERS</span>
<span class="t" id="t82" style="left:673.6px;top:8px;letter-spacing:0.014px;">table</span>
<span class="t" id="t83" style="left:706.1px;top:8px;transform:scaleX(0.9396);">Library:</span>
<span class="t" id="t84" style="left:748px;top:8px;letter-spacing:-0.064px;">c:\users</span>
<span class="t" id="t85" style="left:789.5px;top:8px;letter-spacing:0.097px;">\raul.miranda.datgel</span>
<span class="t" id="t86" style="left:897.5px;top:8px;letter-spacing:0.053px;">\desktop</span>
<span class="t" id="t87" style="left:943.3px;top:8px;letter-spacing:0.214px;">\...</span>
<span class="t" id="t88" style="left:8.3px;top:33px;transform:scaleX(0.9099);">File</span>
<span class="t" id="t89" style="left:39.8px;top:33px;letter-spacing:0.228px;">Additional</span>
<span class="t" id="t90" style="left:98.8px;top:33px;letter-spacing:-0.123px;">Modules</span>
<span class="t" id="t91" style="left:158.5px;top:33px;transform:scaleX(0.9329);">Edit</span>
<span class="t" id="t92" style="left:192.3px;top:33px;letter-spacing:-0.169px;">Format</span>
<span class="t" id="t93" style="left:243.8px;top:33px;letter-spacing:-0.103px;">Tools</span>
<span class="t" id="t94" style="left:286.4px;top:33px;transform:scaleX(0.9225);">Tables</span>
<span class="t" id="t95" style="left:333.1px;top:33px;transform:scaleX(0.9417);">gINT</span>
<span class="t" id="t96" style="left:361.9px;top:33px;transform:scaleX(0.8961);">Rules</span>
<span class="t" id="t97" style="left:403.4px;top:33px;letter-spacing:0.149px;">Add-Ins</span>
<span class="t" id="t98" style="left:460.2px;top:33px;color:#7d7d7d;letter-spacing:0.060px;">Navigation</span>
<span class="t" id="t99" style="left:531.5px;top:33px;letter-spacing:-0.147px;">Bentley</span>
<span class="t" id="t100" style="left:574.5px;top:33px;letter-spacing:-0.272px;">Cloud</span>
<span class="t" id="t101" style="left:609px;top:33px;transform:scaleX(0.9062);">Services</span>
<span class="t" id="t102" style="left:665.5px;top:33px;letter-spacing:-0.247px;">Help</span>
<span class="t b" id="t103" style="left:10.5px;top:80px;">INPUT</span>
<span class="t b" id="t104" style="left:67.5px;top:80px;letter-spacing:-0.141px;">OUTPUT</span>
<span class="t b" id="t105" style="left:137.5px;top:80px;letter-spacing:0.168px;">DATA DESIGN</span>
<span class="t b" id="t106" style="left:240.5px;top:80px;letter-spacing:0.072px;">REPORT DESIGN</span>
<span class="t b" id="t107" style="left:360.5px;top:80px;letter-spacing:-0.036px;">SYMBOL DESIGN</span>
<span class="t b" id="t108" style="left:481.5px;top:80px;letter-spacing:0.062px;">DRAWINGS</span>
<span class="t b" id="t109" style="left:568.2px;top:80px;letter-spacing:0.203px;">UTILITIES</span>
<span class="t b" id="t110" style="left:24.3px;top:102px;letter-spacing:-0.146px;">Show tabs</span>
<span class="t b" id="t111" style="left:273.5px;top:105px;letter-spacing:-0.083px;">[CPT-Liquefaction group]</span>
<span class="t" id="t112" style="left:1031.5px;top:110px;transform:scaleX(0.9171);">Table Help</span>
<span class="t" id="t113" style="left:227.3px;top:576px;transform:scaleX(0.8683);">Name=Gravity.</span>
<span class="t" id="t114" style="left:303.5px;top:576px;transform:scaleX(0.8418);">Gravity</span>
<span class="t" id="t115" style="left:340px;top:576px;transform:scaleX(0.8885);">acceleration</span>
<span class="t" id="t116" style="left:178.8px;top:102px;font-size:16px;">+</span>
<span class="t" id="t117" style="left:200.9px;top:102.9px;font-size:16px;">-</span>
</body></html>
